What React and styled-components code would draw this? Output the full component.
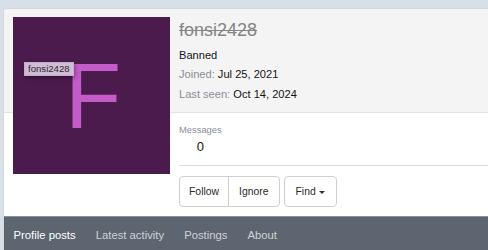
import React from "react";
import styled, { createGlobalStyle } from "styled-components";

const Global = createGlobalStyle`
  html, body { margin: 0; padding: 0; background: #d7dfe9; overflow: hidden; }
  body { font-family: "Liberation Sans", Arial, sans-serif; color: #141414; }
  * { box-sizing: border-box; }
`;

const Card = styled.div`
  margin: 8px -12px 0 3px;
  border: 1px solid #d6d6d6;
  border-radius: 4px;
  overflow: hidden;
  background: #fff;
`;

const Body = styled.div`
  display: flex;
  gap: 9px;
  padding: 8px 9px 9px 9px;
  background: linear-gradient(
    to bottom,
    #f4f4f4 0,
    #f4f4f4 103px,
    #e3e3e3 103px,
    #e3e3e3 104px,
    #ffffff 104px
  );
`;

const Avatar = styled.div`
  position: relative;
  flex: 0 0 157px;
  width: 157px;
  height: 157px;
  background: #4c1b4e;
  display: flex;
  align-items: center;
  justify-content: center;
  color: #c35bc9;
  font-family: "Liberation Sans", Arial, sans-serif;
  font-size: 92px;
  line-height: 1;
  padding-left: 3px;
`;

const Tooltip = styled.span`
  position: absolute;
  left: 11px;
  top: 45px;
  height: 14px;
  padding: 0 3px;
  display: flex;
  align-items: center;
  font-size: 9.6px;
  color: #2a2a2a;
  background: rgba(220, 200, 224, 0.93);
  border: 1px solid rgba(190, 170, 195, 0.8);
  box-shadow: 1px 2px 4px rgba(0, 0, 0, 0.35);
`;

const Main = styled.div`
  flex: 1;
  display: flex;
  flex-direction: column;
`;

const Header = styled.div`
  height: 96px;
`;

const Username = styled.div`
  padding-top: 1px;
  font-size: 18px;
  line-height: 24px;
  color: #858585;
  text-decoration: line-through;
`;

const InfoList = styled.div`
  margin-top: 3.5px;
`;

const InfoLine = styled.div`
  font-size: 11.1px;
  line-height: 19.5px;
  color: #141414;
`;

const Label = styled.span`
  color: #8b8e98;
`;

const Stats = styled.div`
  padding-top: 10px;
  display: flex;
`;

const Stat = styled.div`
  display: flex;
  flex-direction: column;
  align-items: center;
`;

const StatLabel = styled.div`
  font-size: 9.4px;
  line-height: 14px;
  color: #8b8e98;
`;

const StatValue = styled.div`
  font-size: 13px;
  line-height: 20px;
  color: #141414;
`;

const Divider = styled.div`
  margin-top: 8px;
  height: 1px;
  background: #dcdcdc;
`;

const ButtonRow = styled.div`
  display: flex;
  gap: 4px;
  margin-top: 10px;
`;

const Group = styled.div`
  display: flex;
  border: 1px solid #cfcfcf;
  border-radius: 4px;
  background: #fff;
  height: 31px;
`;

const Button = styled.div`
  display: flex;
  align-items: center;
  gap: 3px;
  padding: 0 ${(p) => p.$pad || 9}px;
  font-size: 10.4px;
  color: #2a2a2a;
  & + & {
    border-left: 1px solid #cfcfcf;
  }
`;

const Caret = styled.span`
  width: 0;
  height: 0;
  border-left: 3px solid transparent;
  border-right: 3px solid transparent;
  border-top: 3px solid #333;
  margin-top: 1px;
`;

const Nav = styled.div`
  display: flex;
  background: #5d6570;
  border-top: 1px solid #8a9098;
  height: 40px;
`;

const Tab = styled.div`
  padding: 11px 10px 0;
  font-size: 11.3px;
  line-height: 14px;
  color: ${(p) => (p.$active ? "#ffffff" : "#cdd1d6")};
  &:first-child {
    padding-left: 9.5px;
  }
`;

export default function App() {
  return (
    <>
      <Global />
      <Card>
        <Body>
          <Avatar>
            F
            <Tooltip>fonsi2428</Tooltip>
          </Avatar>
          <Main>
            <Header>
              <Username>fonsi2428</Username>
              <InfoList>
                <InfoLine>Banned</InfoLine>
                <InfoLine>
                  <Label>Joined:</Label> Jul 25, 2021
                </InfoLine>
                <InfoLine>
                  <Label>Last seen:</Label> Oct 14, 2024
                </InfoLine>
              </InfoList>
            </Header>
            <Stats>
              <Stat>
                <StatLabel>Messages</StatLabel>
                <StatValue>0</StatValue>
              </Stat>
            </Stats>
            <Divider />
            <ButtonRow>
              <Group>
                <Button $pad={9}>Follow</Button>
                <Button $pad={10}>Ignore</Button>
              </Group>
              <Group>
                <Button $pad={11}>
                  Find <Caret />
                </Button>
              </Group>
            </ButtonRow>
          </Main>
        </Body>
        <Nav>
          <Tab $active>Profile posts</Tab>
          <Tab>Latest activity</Tab>
          <Tab>Postings</Tab>
          <Tab>About</Tab>
        </Nav>
      </Card>
    </>
  );
}
